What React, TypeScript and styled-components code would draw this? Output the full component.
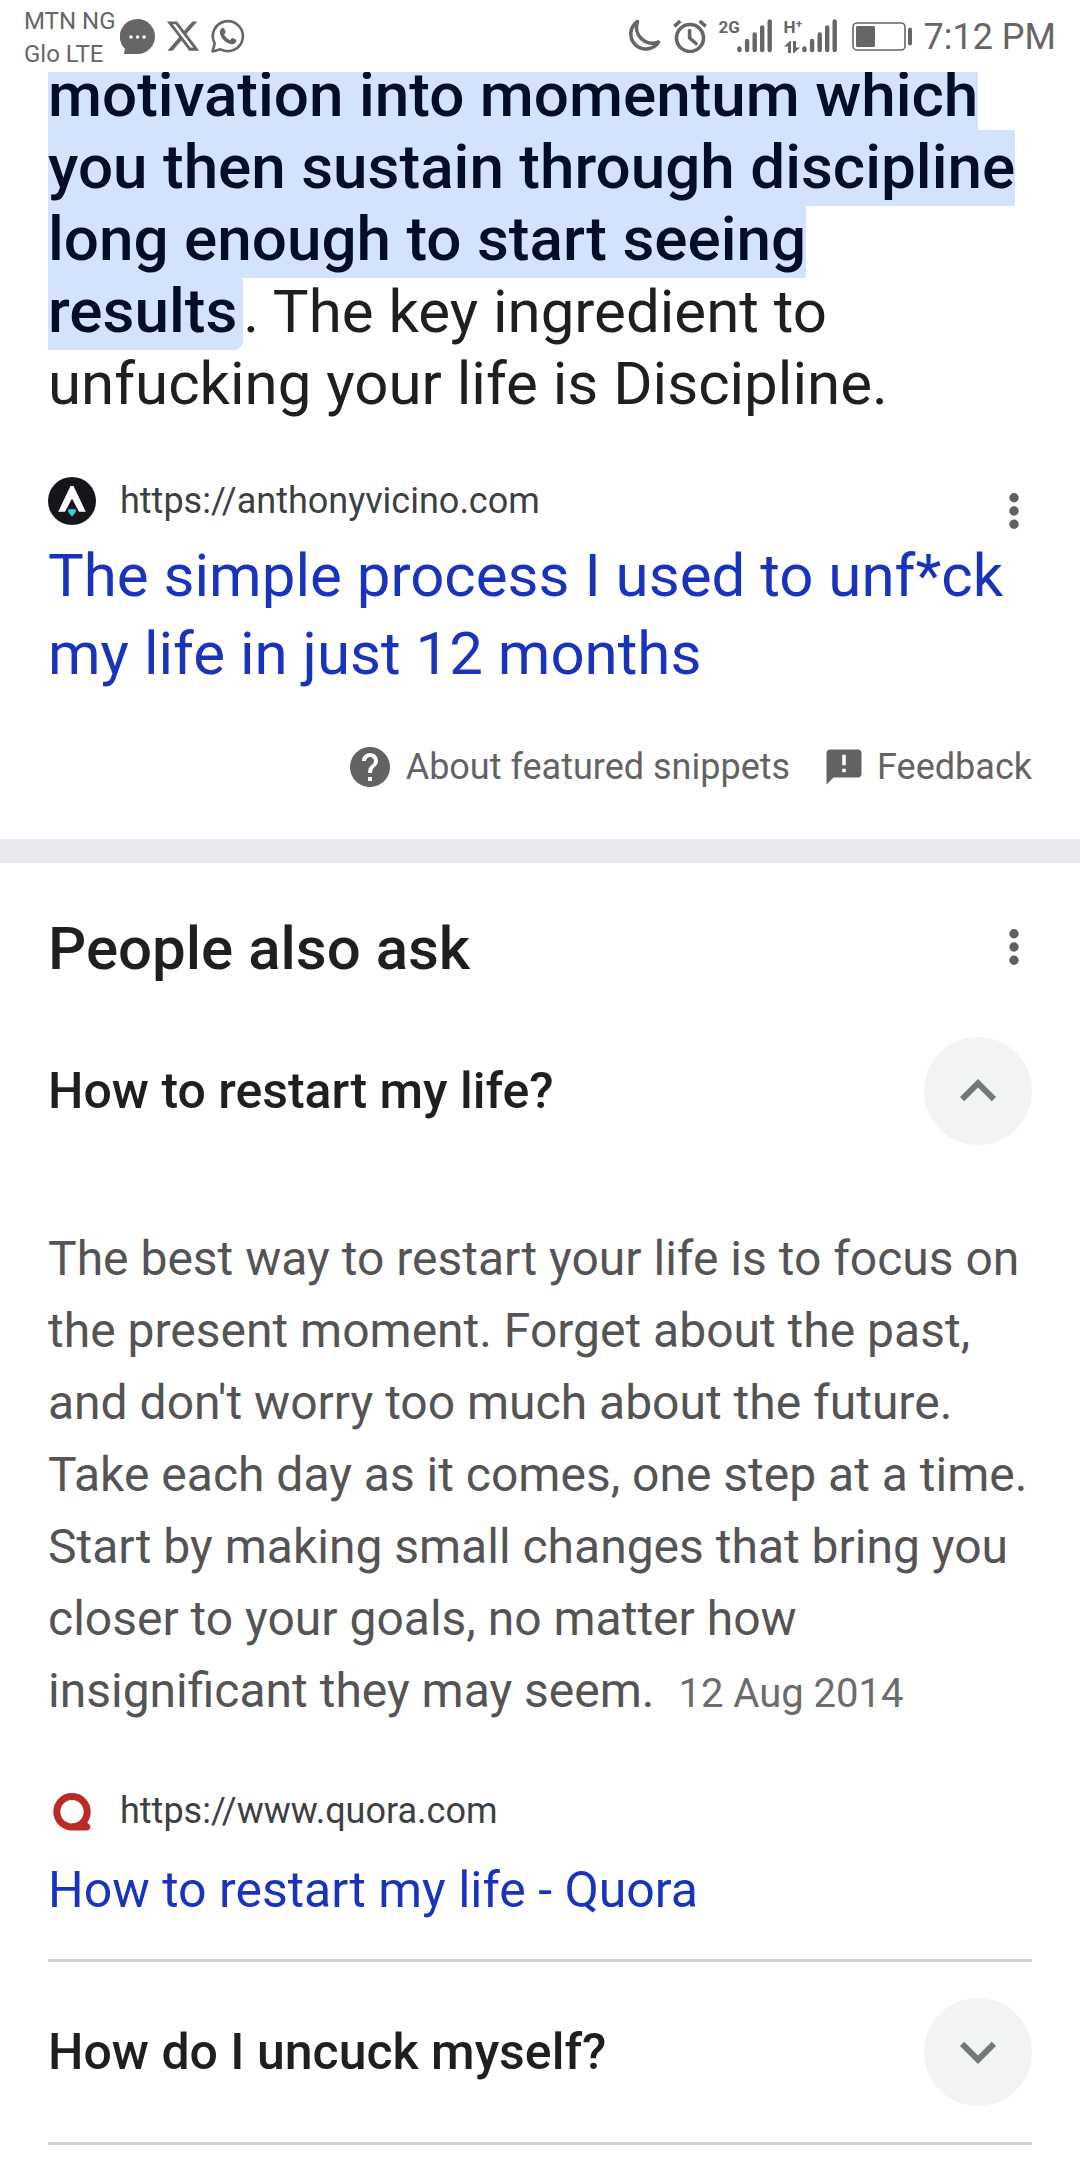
import React, { useState } from "react";
import styled, { createGlobalStyle } from "styled-components";
import { FaXTwitter } from "react-icons/fa6";

const ink = "#1f1f1f";
const muted = "#636363";
const status = "#666666";
const linkBlue = "#1a33bb";

const GlobalStyle = createGlobalStyle`
  *, *::before, *::after { box-sizing: border-box; }
  body {
    margin: 0;
    background: #ffffff;
    color: ${ink};
    font-family: Roboto, "Liberation Sans", sans-serif;
  }
  h2, h3, p { margin: 0; font-weight: 400; }
  svg { display: block; flex: none; }
`;

/* ---------- status bar ---------- */

const StatusBar = styled.header`
  position: relative;
  z-index: 1;
  display: flex;
  justify-content: space-between;
  align-items: center;
  height: 72px;
  padding: 0 24px;
  background: #ffffff;
  color: ${status};
`;

const StatusGroup = styled.div<{ $gap: number }>`
  display: flex;
  align-items: center;
  gap: ${(p) => p.$gap}px;
`;

const Carriers = styled.div`
  font-size: 24px;
  line-height: 33px;
  white-space: nowrap;
  padding-top: 3px;
  margin-right: -5px;
`;

const Signal = styled.div`
  display: flex;
  height: 34px;
`;

const NetworkLabel = styled.span`
  font-size: 17px;
  line-height: 16px;
  font-weight: 700;
`;

const NetworkColumn = styled.div`
  display: flex;
  flex-direction: column;
  justify-content: space-between;
  align-items: flex-start;
  width: 18px;
`;

const Battery = styled.div`
  padding-left: 3px;
`;

const Clock = styled.time`
  font-size: 36px;
  line-height: 48px;
  padding-top: 2px;
  white-space: nowrap;
`;

/* ---------- search results ---------- */

const Section = styled.section`
  padding: 0 48px;
`;

/* The featured snippet is scrolled partly beneath the status bar. */
const FeaturedSnippet = styled(Section)`
  margin-top: -12px;
  padding-bottom: 48px;
`;

const SnippetText = styled.p`
  font-size: 60px;
  line-height: 72px;
  margin-bottom: 57px;
`;

const Highlight = styled.mark`
  padding: 0 6px 3px 0;
  border-radius: 0 9px 9px 0;
  background: #d3e3fd;
  color: #040c28;
  font-size: 62px;
  font-weight: 500;
  line-height: 60px;
`;

const SourceRow = styled.div`
  display: flex;
  justify-content: space-between;
  align-items: flex-start;
`;

const Source = styled.a`
  display: flex;
  align-items: center;
  gap: 24px;
  height: 48px;
  color: #3c4043;
  font-size: 36px;
  line-height: 46px;
  text-decoration: none;
`;

const MenuButton = styled.button`
  display: flex;
  align-items: center;
  justify-content: center;
  width: 36px;
  height: 68px;
  margin: 0 0 -20px;
  padding: 0;
  border: 0;
  background: none;
  color: #5f6061;
  cursor: pointer;
`;

const ResultLink = styled.a<{ $compact?: boolean }>`
  display: block;
  margin-top: ${(p) => (p.$compact ? 16 : 12)}px;
  color: ${linkBlue};
  font-size: ${(p) => (p.$compact ? 50 : 60)}px;
  line-height: 78px;
  text-decoration: none;
`;

const SnippetFooter = styled.footer`
  display: flex;
  flex-wrap: wrap;
  justify-content: flex-end;
  gap: 12px 33px;
  margin-top: 50px;
`;

const FooterLink = styled.a`
  display: flex;
  align-items: center;
  gap: 12px;
  color: ${muted};
  font-size: 36px;
  line-height: 48px;
  text-decoration: none;
`;

const Divider = styled.hr`
  height: 24px;
  margin: 0;
  border: 0;
  background: #e8eaed;
`;

const AskHeader = styled.div`
  display: flex;
  justify-content: space-between;
  align-items: flex-start;
  padding-top: 50px;
`;

const AskTitle = styled.h2`
  font-size: 60px;
  line-height: 72px;
  font-weight: 500;
`;

const Item = styled.div<{ $first?: boolean }>`
  padding: ${(p) => (p.$first ? 52 : 36)}px 0 ${(p) => (p.$first ? 30 : 36)}px;
  border-bottom: 3px solid #d2d2d2;
`;

const Question = styled.button`
  display: flex;
  justify-content: space-between;
  align-items: center;
  width: 100%;
  padding: 0;
  border: 0;
  background: none;
  color: ${ink};
  font-family: inherit;
  font-size: 50px;
  font-weight: 500;
  line-height: 60px;
  text-align: left;
  cursor: pointer;
`;

const Toggle = styled.span<{ $open: boolean }>`
  display: flex;
  align-items: center;
  justify-content: center;
  flex: none;
  width: 108px;
  height: 108px;
  border-radius: 50%;
  background: #f1f3f4;
  color: #757879;

  svg {
    transform: ${(p) => (p.$open ? "none" : "rotate(180deg)")};
  }
`;

const Answer = styled.p`
  margin: 78px 0 60px;
  color: #545454;
  font-size: 48px;
  line-height: 72px;
`;

const AnswerDate = styled.time`
  margin-left: 12px;
  color: #6b6b6b;
  font-size: 40px;
  line-height: 60px;
  white-space: nowrap;
`;

/* ---------- icons ---------- */

const ChatIcon = () => (
  <svg width="35" height="35" viewBox="0 0 35 35" aria-hidden="true">
    <path
      fill="currentColor"
      d="M17.5 0A17.5 17.5 0 0 1 35 17.5 17.5 17.5 0 0 1 17.5 35H4.5Q3.6 35 4 34L5 30A17.5 17.5 0 0 1 17.5 0Z"
    />
    <circle cx="11" cy="18" r="1.8" fill="#fff" />
    <circle cx="17.5" cy="18" r="1.8" fill="#fff" />
    <circle cx="24" cy="18" r="1.8" fill="#fff" />
  </svg>
);

const WhatsAppIcon = () => (
  <svg width="34" height="34" viewBox="0 0 34 34" aria-hidden="true">
    <path
      d="M1.6 32.4 3.7 24.4A15 15 0 1 1 9.6 30.3Z"
      fill="none"
      stroke="currentColor"
      strokeWidth="2.6"
      strokeLinejoin="round"
    />
    <path
      fill="currentColor"
      d="M10.8 9.2C11.6 8.4 12.8 8.6 13.2 9.5L14.5 12.6C14.8 13.3 14.6 13.8 14.2 14.3L13 15.6C14.4 18.3 16.3 20 18.9 21.2L20.4 19.4C20.8 18.9 21.3 18.8 21.9 19.1L24.7 20.5C25.4 20.9 25.5 21.4 25.3 22.2 24.7 24.3 22.9 25.3 20.9 25.2 15 24.7 9.2 19 8.8 13.5 8.7 11.6 9.6 10.1 10.8 9.2Z"
    />
  </svg>
);

const MoonIcon = () => (
  <svg width="34" height="34" viewBox="0 0 34 34" aria-hidden="true">
    <path
      d="M10.5 2.5A15 15 0 1 0 31.5 23 16 16 0 0 1 10.5 2.5Z"
      fill="none"
      stroke="currentColor"
      strokeWidth="3.6"
      strokeLinejoin="round"
    />
  </svg>
);

const AlarmIcon = () => (
  <svg width="34" height="34" viewBox="0 0 34 34" aria-hidden="true">
    <g fill="none" stroke="currentColor" strokeWidth="3.6">
      <circle cx="17" cy="19" r="13.5" />
      <path d="M16.6 11.5V19L23 24.5" strokeLinejoin="round" strokeLinecap="round" />
      <path d="M1.3 7.3 7.3 2M32.7 7.3 26.7 2" />
    </g>
  </svg>
);

const BarsIcon = () => (
  <svg width="35" height="34" viewBox="0 0 35 34" aria-hidden="true">
    <g stroke="currentColor" strokeWidth="4.4" strokeLinecap="round">
      <path d="M2.4 29.5V31M10.1 22V31M17.7 15.5V31M25.2 8.5V31M32.7 2.5V31" />
    </g>
  </svg>
);

const DataArrowsIcon = () => (
  <svg width="16" height="12" viewBox="0 0 16 12" aria-hidden="true">
    <path fill="currentColor" d="M4 12V5.5H0L6 0H7V12ZM9 0H12V6.5H16L10 12H9Z" />
  </svg>
);

const BatteryIcon = () => (
  <svg width="60" height="29" viewBox="0 0 60 29" aria-hidden="true">
    <rect x="1" y="1" width="52" height="27" rx="4" fill="none" stroke="currentColor" strokeWidth="1.6" />
    <rect x="4" y="4" width="19" height="21" rx="1.5" fill="currentColor" />
    <rect x="56" y="5.5" width="4" height="18" rx="2" fill="currentColor" />
  </svg>
);

const DotsIcon = () => (
  <svg width="10" height="36" viewBox="0 0 10 36" fill="currentColor" aria-hidden="true">
    <circle cx="5" cy="4.7" r="4.7" />
    <circle cx="5" cy="18" r="4.7" />
    <circle cx="5" cy="31.3" r="4.7" />
  </svg>
);

const VicinoIcon = () => (
  <svg width="48" height="48" viewBox="0 0 48 48" aria-hidden="true">
    <circle cx="24" cy="24" r="24" fill="#15161c" />
    <path fill="#fff" d="M22.5 9H25.5L37.8 34.8H31L24 21.5 17 34.8H10.2Z" />
    <path fill="#2fd3d8" d="M20.2 32.2H27.8V35L24 39.8 20.2 35Z" />
  </svg>
);

const QuoraIcon = () => (
  <svg width="48" height="48" viewBox="0 0 48 48" aria-hidden="true">
    <circle cx="24" cy="24.8" r="15.2" fill="none" stroke="#b92b27" strokeWidth="7" />
    <path fill="#b92b27" d="M24 36.6H33L37 33.5 42.3 38.5Q43 43.5 38 43.5H27Z" />
  </svg>
);

const HelpIcon = () => (
  <svg width="48" height="48" viewBox="0 0 24 24" fill="currentColor" aria-hidden="true">
    <path d="M12 2C6.48 2 2 6.48 2 12s4.48 10 10 10 10-4.48 10-10S17.52 2 12 2zm1 17h-2v-2h2v2zm2.07-7.75l-.9.92C13.45 12.9 13 13.5 13 15h-2v-.5c0-1.1.45-2.1 1.17-2.83l1.24-1.26c.37-.36.59-.86.59-1.41 0-1.1-.9-2-2-2s-2 .9-2 2H8c0-2.21 1.79-4 4-4s4 1.79 4 4c0 .88-.36 1.68-.93 2.25z" />
  </svg>
);

const FeedbackIcon = () => (
  <svg width="42" height="42" viewBox="0 0 24 24" fill="currentColor" aria-hidden="true">
    <path d="M20 2H4c-1.1 0-1.99.9-1.99 2L2 22l4-4h14c1.1 0 2-.9 2-2V4c0-1.1-.9-2-2-2zm-7 13h-2v-2h2v2zm0-4h-2V5h2v6z" />
  </svg>
);

const ChevronIcon = () => (
  <svg width="72" height="72" viewBox="0 0 24 24" fill="currentColor" aria-hidden="true">
    <path d="M12 8l-6 6 1.41 1.41L12 10.83l4.59 4.58L18 14z" />
  </svg>
);

/* ---------- page ---------- */

type AskItemProps = {
  question: string;
  first?: boolean;
  defaultOpen?: boolean;
  children?: React.ReactNode;
};

function AskItem({ question, first, defaultOpen = false, children }: AskItemProps) {
  const [open, setOpen] = useState(defaultOpen);
  return (
    <Item $first={first}>
      <h3>
        <Question type="button" aria-expanded={open} onClick={() => setOpen(!open)}>
          {question}
          <Toggle $open={open}>
            <ChevronIcon />
          </Toggle>
        </Question>
      </h3>
      {open && children}
    </Item>
  );
}

export default function App() {
  return (
    <>
      <GlobalStyle />
      <StatusBar>
        <StatusGroup $gap={10}>
          <Carriers>
            MTN NG
            <br />
            Glo LTE
          </Carriers>
          <ChatIcon />
          <FaXTwitter size={36} aria-hidden="true" />
          <WhatsAppIcon />
        </StatusGroup>
        <StatusGroup $gap={12}>
          <MoonIcon />
          <AlarmIcon />
          <Signal>
            <NetworkColumn>
              <NetworkLabel>2G</NetworkLabel>
            </NetworkColumn>
            <BarsIcon />
          </Signal>
          <Signal>
            <NetworkColumn>
              <NetworkLabel>H⁺</NetworkLabel>
              <DataArrowsIcon />
            </NetworkColumn>
            <BarsIcon />
          </Signal>
          <Battery>
            <BatteryIcon />
          </Battery>
          <Clock>7:12 PM</Clock>
        </StatusGroup>
      </StatusBar>

      <main>
        <FeaturedSnippet>
          <SnippetText>
            <Highlight>
              motivation into momentum which you then sustain through discipline long enough to start
              seeing
              <br />
              results
            </Highlight>
            . The key ingredient to unfucking your life is Discipline.
          </SnippetText>
          <SourceRow>
            <Source href="#anthonyvicino">
              <VicinoIcon />
              https://anthonyvicino.com
            </Source>
            <MenuButton type="button" aria-label="About this result">
              <DotsIcon />
            </MenuButton>
          </SourceRow>
          <ResultLink href="#anthonyvicino">
            The simple process I used to unf*ck my life in just 12 months
          </ResultLink>
          <SnippetFooter>
            <FooterLink href="#about">
              <HelpIcon />
              About featured snippets
            </FooterLink>
            <FooterLink href="#feedback">
              <FeedbackIcon />
              Feedback
            </FooterLink>
          </SnippetFooter>
        </FeaturedSnippet>

        <Divider />

        <Section>
          <AskHeader>
            <AskTitle>People also ask</AskTitle>
            <MenuButton type="button" aria-label="About these results">
              <DotsIcon />
            </MenuButton>
          </AskHeader>

          <AskItem question="How to restart my life?" first defaultOpen>
            <Answer>
              The best way to restart your life is to focus on the present moment. Forget about the
              past, and don't worry too much about the future. Take each day as it comes, one step
              at a time. Start by making small changes that bring you closer to your goals, no
              matter how insignificant they may seem. <AnswerDate>12 Aug 2014</AnswerDate>
            </Answer>
            <SourceRow>
              <Source href="#quora">
                <QuoraIcon />
                https://www.quora.com
              </Source>
            </SourceRow>
            <ResultLink $compact href="#quora">
              How to restart my life - Quora
            </ResultLink>
          </AskItem>

          <AskItem question="How do I uncuck myself?" />
        </Section>
      </main>
    </>
  );
}
